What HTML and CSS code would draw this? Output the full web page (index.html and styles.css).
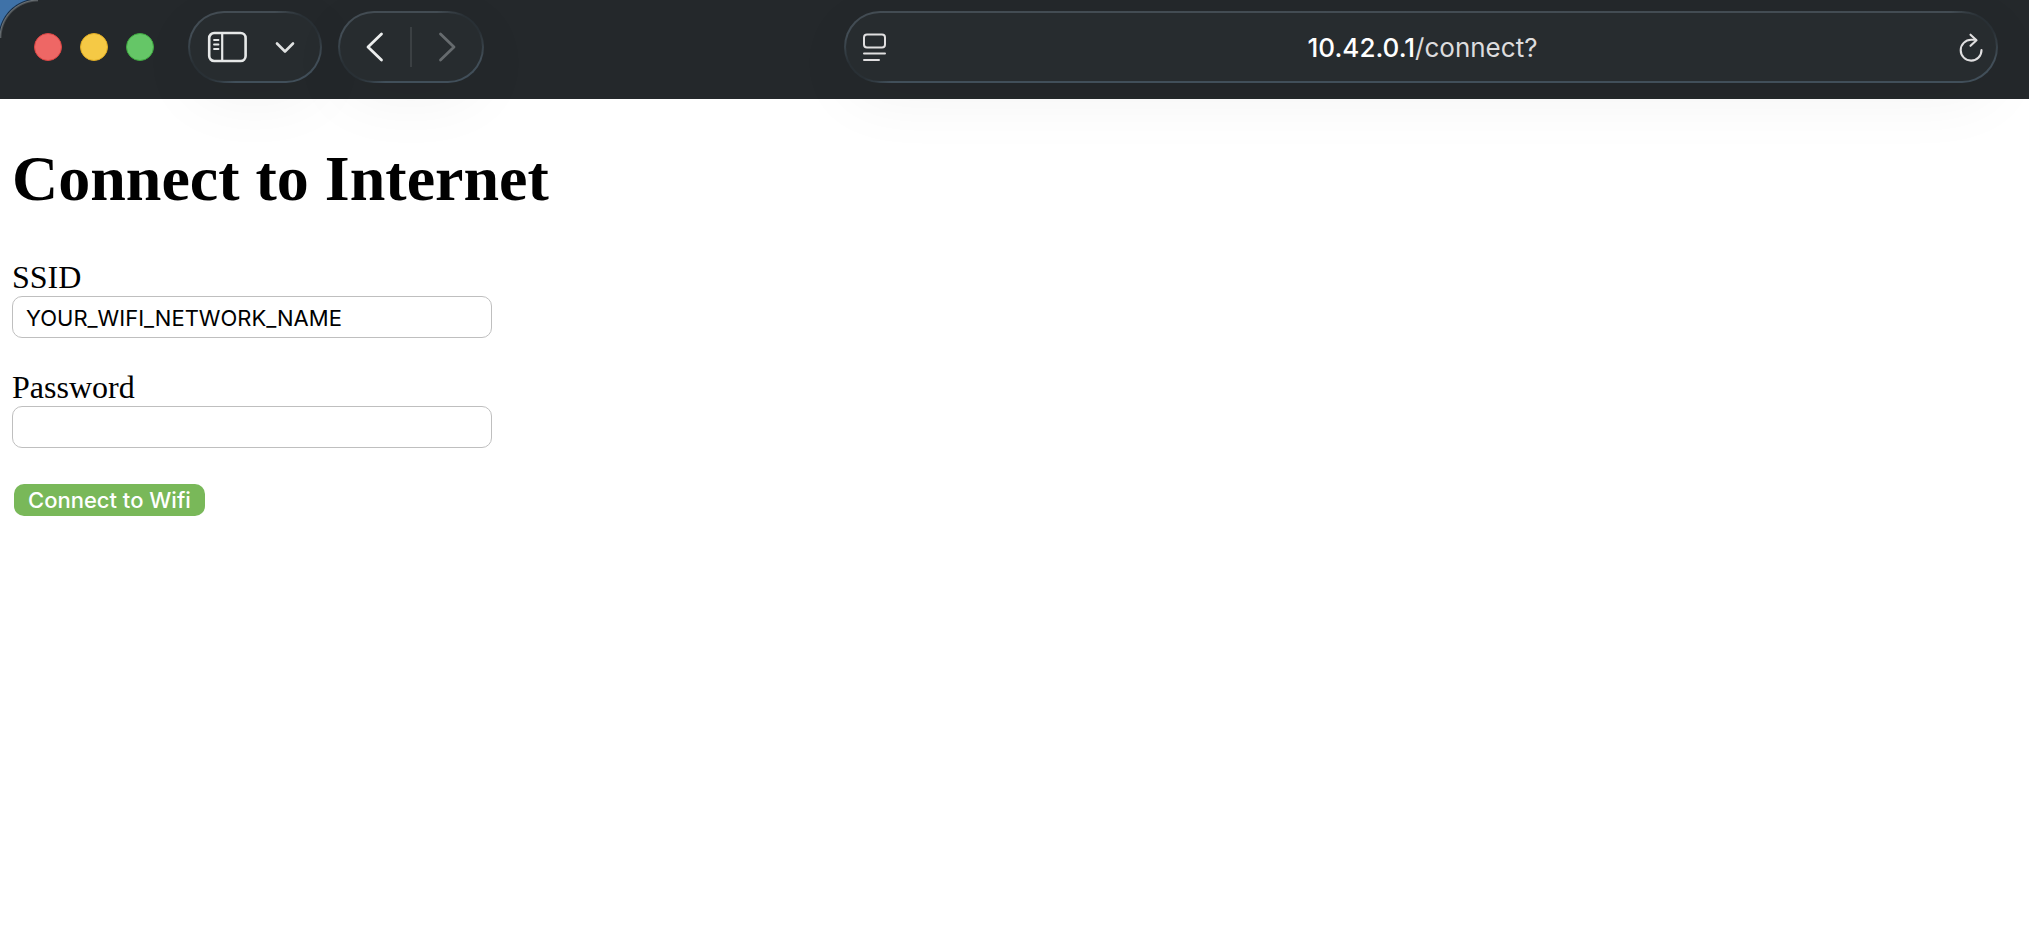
FILE: index.html
```html
<!DOCTYPE html>
<html lang="en">
<head>
    <meta charset="UTF-8">
    <meta name="viewport" content="width=device-width, initial-scale=1.0">
    <title>Connect to Internet</title>
    <link rel="stylesheet" href="styles.css">
</head>
<body>
    <header class="toolbar">
        <div class="lights">
            <button class="light red" aria-label="Close"></button>
            <button class="light yellow" aria-label="Minimize"></button>
            <button class="light green" aria-label="Zoom"></button>
        </div>
        <div class="pill sidebar-pill">
            <button class="icon-btn" aria-label="Sidebar">
                <svg width="40" height="32" viewBox="0 0 40 32" fill="none" stroke="#e6e8e8" stroke-linecap="round">
                    <rect x="1.2" y="2" width="36.4" height="28" rx="5" stroke-width="2.6"/>
                    <path d="M14.2 2v28" stroke-width="2.2"/>
                    <path d="M6 9h4.5M6 13.5h4.5M6 18h4.5" stroke-width="1.8"/>
                </svg>
            </button>
            <button class="icon-btn" aria-label="Tab groups">
                <svg width="20" height="12" viewBox="0 0 20 12" fill="none" stroke="#e0e2e2" stroke-width="2.6" stroke-linecap="round" stroke-linejoin="round">
                    <path d="M2 2.5l8 8l8-8"/>
                </svg>
            </button>
        </div>
        <div class="pill nav-pill">
            <button class="icon-btn" aria-label="Back">
                <svg width="18" height="30" viewBox="0 0 18 30" fill="none" stroke="#eceeee" stroke-width="2.8" stroke-linecap="round" stroke-linejoin="round">
                    <path d="M15.5 2L2 15L15.5 28"/>
                </svg>
            </button>
            <span class="divider"></span>
            <button class="icon-btn" aria-label="Forward">
                <svg width="18" height="30" viewBox="0 0 18 30" fill="none" stroke="#666b6e" stroke-width="2.8" stroke-linecap="round" stroke-linejoin="round">
                    <path d="M2.5 2L16 15L2.5 28"/>
                </svg>
            </button>
        </div>
        <div class="pill address">
            <button class="icon-btn" aria-label="Page menu">
                <svg width="24" height="28" viewBox="0 0 24 28" fill="none" stroke="#e0dfe0" stroke-width="2" stroke-linecap="round">
                    <rect x="2" y="1.5" width="21" height="13" rx="3"/>
                    <path d="M2 20.5h21M2 27h15"/>
                </svg>
            </button>
            <span class="url"><span class="host">10.42.0.1</span>/connect?</span>
            <button class="icon-btn" aria-label="Reload">
                <svg width="24" height="28" viewBox="0 0 24 28" fill="none" stroke="#e0dfe0" stroke-width="2.1" stroke-linecap="round" stroke-linejoin="round">
                    <path d="M22.5 17A10.4 10.4 0 1 1 12.1 6.8H16.7"/>
                    <path d="M11.5 1.7L17.5 7.2L11.5 12.8"/>
                </svg>
            </button>
        </div>
    </header>
    <main class="page">
        <h1 class="title">Connect to Internet</h1>
        <form class="wifi-form">
            <div class="field">
                <label class="label" for="ssid">SSID</label>
                <input class="text-input" type="text" id="ssid" name="ssid" value="YOUR_WIFI_NETWORK_NAME">
            </div>
            <div class="field">
                <label class="label" for="password">Password</label>
                <input class="text-input" type="password" id="password" name="password">
            </div>
            <button class="connect-btn" type="submit">Connect to Wifi</button>
        </form>
    </main>
</body>
</html>
```

FILE: styles.css
```css
* {
    box-sizing: border-box;
}
body {
    margin: 0;
    background: #fff;
}
button {
    border: none;
    padding: 0;
    background: none;
    cursor: pointer;
}
/* rounded window corner with the desktop showing behind it */
.toolbar {
    position: relative;
    z-index: 1;
    display: flex;
    align-items: center;
    padding: 11px 31px 16px 34px;
    background:
        radial-gradient(circle at 38px 38px, #24282b 36px, #6b7175 38px, #152c45 39px, #3f72a8 40px) 0 0 / 38px 38px no-repeat,
        #24282b;
}
.lights {
    display: flex;
    gap: 18px;
    margin-right: 34px;
}
.light {
    width: 28px;
    height: 28px;
    border-radius: 50%;
    border: 1px solid;
}
.red {
    background: #ee6765;
    border-color: #dc4543;
}
.yellow {
    background: #f5c945;
    border-color: #e0ac22;
}
.green {
    background: #65c667;
    border-color: #3eaa40;
}
/* rim of the glass pills fades out at the top right and bottom left */
.pill {
    display: flex;
    align-items: center;
    justify-content: space-between;
    height: 72px;
    border: 2px solid transparent;
    border-radius: 36px;
    background:
        linear-gradient(#272c2f, #272c2f) padding-box,
        radial-gradient(circle 40px at right 8px top 8px, #293035 30%, transparent) border-box,
        radial-gradient(circle 40px at left 8px bottom 8px, #293035 30%, transparent) border-box,
        linear-gradient(#434c53, #414f5a) border-box;
    box-shadow: 0 16px 64px rgba(0, 0, 0, 0.05);
}
.icon-btn svg {
    display: block;
    overflow: visible;
}
.sidebar-pill {
    width: 134px;
    padding: 0 25px 0 18px;
    margin-right: 16px;
}
.nav-pill {
    width: 146px;
    padding: 0 26px;
    margin-right: 360px;
}
.divider {
    width: 2px;
    height: 40px;
    background: #3b4043;
}
.address {
    flex: 1;
    padding: 0 13px 0 16px;
}
.url {
    padding-top: 2px;
    font: 26px/32px Inter, sans-serif;
    color: #dddcdd;
}
.host {
    font-weight: 500;
    color: #fff;
}
.page {
    padding: 43px 12px;
    font-family: "Liberation Serif", serif;
    color: #000;
}
.title {
    margin: 0 0 43px;
    font-size: 64px;
    line-height: 74px;
}
.wifi-form {
    display: flex;
    flex-direction: column;
    align-items: flex-start;
}
.field {
    display: flex;
    flex-direction: column;
    margin-bottom: 31px;
}
.label {
    font-size: 32px;
    line-height: 37px;
}
.text-input {
    width: 480px;
    max-width: 100%;
    height: 42px;
    padding: 2px 13px 0;
    border: 1px solid #bfbfbf;
    border-radius: 10px;
    background: #fff;
    font: 22px Inter, sans-serif;
    color: #000;
}
.connect-btn {
    height: 32px;
    margin: 5px 2px;
    padding: 0 14px;
    border-radius: 10px;
    background: #79b859;
    font: 500 22px/32px Inter, sans-serif;
    color: #fff;
}
```
